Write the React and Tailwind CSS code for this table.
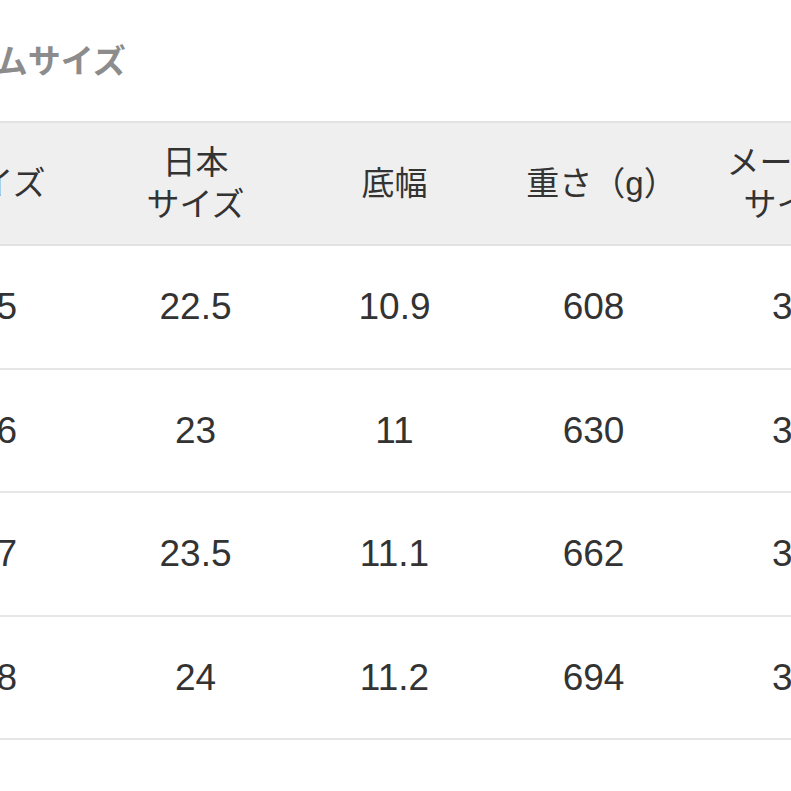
import React from "react";

const header = ["サイズ", "日本\nサイズ", "底幅", "重さ（g）", "メーカー\nサイズ"];
const rows = [
  ["35", "22.5", "10.9", "608", "35"],
  ["36", "23", "11", "630", "36"],
  ["37", "23.5", "11.1", "662", "37"],
  ["38", "24", "11.2", "694", "38"],
];

export default function App() {
  return (
    <div
      className="w-[791px] h-[791px] overflow-hidden bg-white text-[#333]"
      style={{ fontFamily: '"Liberation Sans", "Noto Sans CJK JP", sans-serif' }}
    >
      <div className="ml-[-103px] w-[995px]">
        <h2 className="pt-[40px] pl-[2px] h-[121px] text-[33px] leading-[44px] font-bold text-[#8c8c8c]">
          アイテムサイズ
        </h2>
        <div className="grid grid-cols-[repeat(5,199px)] bg-[#efefef] border-y-2 border-[#e2e2e2] h-[125px]">
          {header.map((h, j) => (
            <div
              key={h}
              className={
                "flex items-center justify-center text-center whitespace-pre-line text-[33px] leading-[42px]" +
                (j === 3 ? " pl-[16px]" : "")
              }
            >
              {h}
            </div>
          ))}
        </div>
        {rows.map((r, i) => (
          <div
            key={i}
            className="grid grid-cols-[repeat(5,199px)] border-b-2 border-[#e6e6e6] h-[123.5px]"
          >
            {r.map((c, j) => (
              <div key={j} className="flex items-center justify-center text-[37px]">
                {c}
              </div>
            ))}
          </div>
        ))}
      </div>
    </div>
  );
}
